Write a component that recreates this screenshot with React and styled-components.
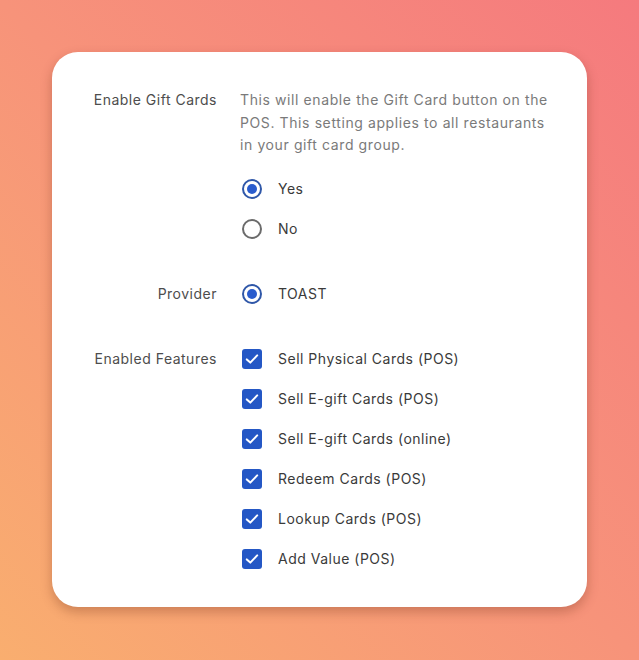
import styled, { createGlobalStyle } from "styled-components";

const GlobalStyle = createGlobalStyle`
  html, body {
    margin: 0;
    padding: 0;
  }
  body {
    font-family: Inter, "Noto Sans", sans-serif;
    -webkit-font-smoothing: antialiased;
  }
`;

const Page = styled.div`
  width: 639px;
  height: 660px;
  padding: 52px 0 0 52px;
  box-sizing: border-box;
  background: linear-gradient(to bottom left, #f57a7e 0%, #f7937a 50%, #f9ae6f 100%);
`;

const Card = styled.div`
  width: 535px;
  height: 555px;
  box-sizing: border-box;
  padding: 37px 0 0 0;
  background: #fff;
  border-radius: 26px;
  box-shadow: 0 5px 12px rgba(90, 30, 10, 0.28);
  display: grid;
  grid-template-columns: 165px 318px;
  column-gap: 23px;
  row-gap: 25px;
  align-content: start;
`;

const Label = styled.div`
  text-align: right;
  font-size: 14px;
  line-height: 22px;
  color: #4d4d4d;
  letter-spacing: 0.5px;
  padding-top: ${(p) => (p.$offset ? "9px" : "0")};
`;

const Field = styled.div`
  display: flex;
  flex-direction: column;
`;

const Description = styled.p`
  margin: 0 0 12px;
  font-size: 14px;
  line-height: 22.5px;
  color: #7a7a7a;
  letter-spacing: 0.6px;
`;

const Option = styled.label`
  display: flex;
  align-items: center;
  gap: 16px;
  height: 40px;
  font-size: 14px;
  color: #3a3a3a;
  letter-spacing: 0.5px;
  padding-left: 2px;
`;

const Radio = styled.span`
  width: 20px;
  height: 20px;
  box-sizing: border-box;
  border-radius: 50%;
  border: 2px solid ${(p) => (p.$checked ? "#2f57a8" : "#6b6b6b")};
  display: flex;
  align-items: center;
  justify-content: center;
  flex-shrink: 0;

  &::after {
    content: "";
    width: 10px;
    height: 10px;
    border-radius: 50%;
    background: #2a5ccd;
    display: ${(p) => (p.$checked ? "block" : "none")};
  }
`;

const Box = styled.span`
  width: 20px;
  height: 20px;
  border-radius: 3px;
  background: #2457c5;
  display: flex;
  align-items: center;
  justify-content: center;
  flex-shrink: 0;
`;

const Check = () => (
  <Box>
    <svg width="16" height="16" viewBox="0 0 16 16" fill="none">
      <path
        d="M2.8 8.4 L6.3 11.6 L13.2 4.4"
        stroke="#fff"
        strokeWidth="2"
        strokeLinecap="round"
        strokeLinejoin="round"
      />
    </svg>
  </Box>
);

const features = [
  "Sell Physical Cards (POS)",
  "Sell E-gift Cards (POS)",
  "Sell E-gift Cards (online)",
  "Redeem Cards (POS)",
  "Lookup Cards (POS)",
  "Add Value (POS)",
];

export default function App() {
  return (
    <>
      <GlobalStyle />
      <Page>
        <Card>
          <Label>Enable Gift Cards</Label>
          <Field>
            <Description>
              This will enable the Gift Card button on the POS. This setting
              applies to all restaurants in your gift card group.
            </Description>
            <Option>
              <Radio $checked />
              Yes
            </Option>
            <Option>
              <Radio />
              No
            </Option>
          </Field>

          <Label $offset>Provider</Label>
          <Field>
            <Option>
              <Radio $checked />
              TOAST
            </Option>
          </Field>

          <Label $offset>Enabled Features</Label>
          <Field>
            {features.map((f) => (
              <Option key={f}>
                <Check />
                {f}
              </Option>
            ))}
          </Field>
        </Card>
      </Page>
    </>
  );
}
